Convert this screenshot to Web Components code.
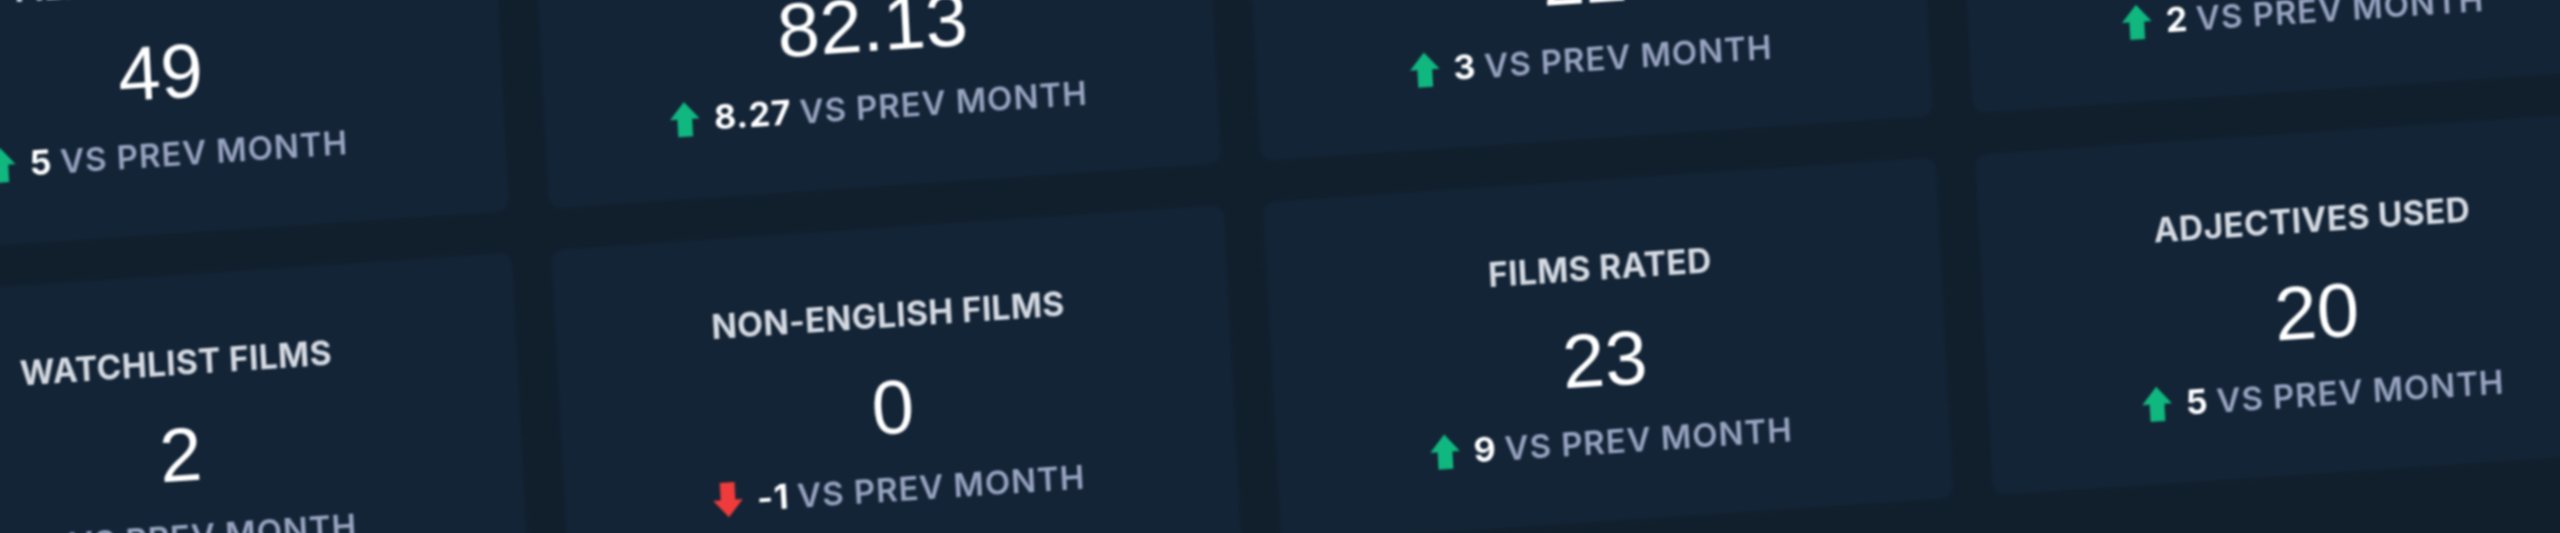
<!DOCTYPE html>
<html>
<head>
<meta charset="utf-8">
<title>Film stats</title>
<style>
  html, body { margin: 0; height: 100%; background: #111f2c; overflow: hidden; }
</style>
</head>
<body>
<stats-board>
  <stat-card label="FILMS WATCHED" value="49" delta="5"></stat-card>
  <stat-card value="82.13" delta="8.27"></stat-card>
  <stat-card value="22" delta="3"></stat-card>
  <stat-card value="" delta="2"></stat-card>
  <stat-card label="WATCHLIST FILMS" value="2" trend="flat"></stat-card>
  <stat-card label="NON-ENGLISH FILMS" value="0" delta="-1" trend="down"></stat-card>
  <stat-card label="FILMS RATED" value="23" delta="9"></stat-card>
  <stat-card label="ADJECTIVES USED" value="20" delta="5"></stat-card>
</stats-board>

<script>
class StatsBoard extends HTMLElement {
    constructor() {
        super();
        this.attachShadow({ mode: 'open' });
        this.shadowRoot.innerHTML = `
      <style>
        :host {
          display: grid;
          grid-template-columns: repeat(4, 672px);
          grid-auto-rows: 340px;
          column-gap: 40px;
          row-gap: 42px;
          width: max-content;
          transform-origin: 0 0;
          /* the whole board is photographed at an angle */
          transform: matrix(1, -0.067, 0.053, 1, -181, -84);
          filter: blur(0.8px);
        }
      </style>
      <slot></slot>
    `;
    }
}

class StatCard extends HTMLElement {
    connectedCallback() {
        const label = this.getAttribute('label') || '';
        const value = this.getAttribute('value') || '';
        const delta = this.getAttribute('delta') || '';
        const trend = this.getAttribute('trend') || 'up';

        // Arrow points up for growth, down for a drop, nothing when flat
        let arrow = '<path d="M12 1l12 14h-6v14H6V15H0z" fill="#10b77f"/>';
        if (trend === 'down') arrow = '<path d="M6 1h12v14h6L12 29 0 15h6z" fill="#ef3b3b"/>';
        if (trend === 'flat') arrow = '';

        this.attachShadow({ mode: 'open' });
        this.shadowRoot.innerHTML = `
      <style>
        :host {
          display: flex;
          flex-direction: column;
          align-items: center;
          justify-content: center;
          padding-top: 7px;
          box-sizing: border-box;
          background: #132436;
          border-radius: 12px;
          box-shadow: 0 0 14px rgba(19, 36, 54, 0.5);
        }
        .label {
          font: 700 33.500px/40px "Inter", "Liberation Sans", sans-serif;
          letter-spacing: 0.3px;
          color: #d5dae2;
          height: 40px;
          margin: 0 8px 27px 0;
        }
        .value {
          font: 400 76px/90px "Liberation Sans", sans-serif;
          color: #ffffff;
          height: 90px;
          margin: 0 8px 17px 0;
        }
        .delta {
          display: flex;
          align-items: center;
          font: 600 33px/40px "Inter", "Liberation Sans", sans-serif;
          letter-spacing: 0.9px;
          color: #98a3c0;
          height: 40px;
          margin-right: 4px;
        }
        .delta svg { width: 30px; height: 37px; margin-right: 14px; }
        .delta b { color: #ffffff; font-size: 34px; font-weight: 700; margin-right: 8px; }
      </style>
      <div class="label">${label}</div>
      <div class="value">${value}</div>
      <div class="delta">
        <svg viewBox="0 0 24 30">${arrow}</svg>
        <b>${delta}</b><span>VS PREV MONTH</span>
      </div>
    `;
    }
}

customElements.define('stats-board', StatsBoard);
customElements.define('stat-card', StatCard);
</script>
</body>
</html>
